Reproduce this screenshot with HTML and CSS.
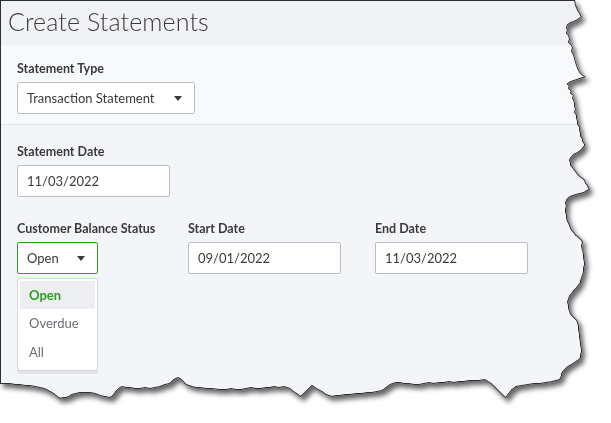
FILE: index.html
```html
<!DOCTYPE html>
<html>
<head>
<meta charset="utf-8">
<link rel="stylesheet" href="styles.css">
</head>
<body>
<div class="page">
  <div class="shadow-wrap">
    <div class="panel">
      <header class="head"><h1 class="title">Create Statements</h1></header>
      <section class="sec sec-type">
        <div class="field">
          <label class="lbl">Statement Type</label>
          <div class="ctrl select w-type"><span>Transaction Statement</span><i class="caret"></i></div>
        </div>
      </section>
      <section class="sec sec-main">
        <div class="field">
          <label class="lbl">Statement Date</label>
          <div class="ctrl w-date"><span>11/03/2022</span></div>
        </div>
        <div class="row">
          <div class="field">
            <label class="lbl">Customer Balance Status</label>
            <div class="dd">
              <div class="ctrl select w-status active"><span>Open</span><i class="caret"></i></div>
              <ul class="menu">
                <li class="item sel">Open</li>
                <li class="item">Overdue</li>
                <li class="item">All</li>
              </ul>
            </div>
          </div>
          <div class="field">
            <label class="lbl">Start Date</label>
            <div class="ctrl w-date"><span>09/01/2022</span></div>
          </div>
          <div class="field">
            <label class="lbl">End Date</label>
            <div class="ctrl w-date"><span>11/03/2022</span></div>
          </div>
        </div>
      </section>
      <svg class="edge" width="611" height="423" viewBox="0 0 611 423">
        <path d="M0,0 L575,0 L576,5 L578,10 L580,13 L582,17 L579,19 L576,21 L574,22 L571,23 L568,25 L567,28 L568,30 L567,33 L569,35 L570,39 L569,42 L572,45 L573,48 L572,51 L574,55 L575,58 L576,62 L577,65 L578,68 L580,72 L581,73 L583,75 L586,77 L583,78 L580,79 L577,80 L574,81 L571,82 L568,84 L570,86 L569,88 L572,91 L571,93 L574,95 L573,98 L574,100 L575,103 L575,106 L576,109 L575,112 L577,115 L577,118 L578,121 L578,124 L580,127 L580,130 L581,133 L581,136 L583,139 L583,141 L585,144 L585,146 L583,148 L582,150 L579,152 L578,153 L575,154 L573,156 L571,158 L570,160 L571,163 L571,165 L573,167 L574,169 L576,171 L577,173 L579,175 L581,177 L583,178 L585,180 L586,183 L588,185 L589,188 L590,190 L587,191 L584,193 L580,194 L576,195 L573,196 L570,197 L568,199 L567,200 L566,203 L567,206 L566,209 L566,212 L567,215 L567,218 L568,221 L570,225 L571,228 L572,230 L574,232 L576,235 L578,236 L580,238 L582,240 L583,242 L582,246 L583,250 L584,254 L584,258 L585,262 L585,265 L584,268 L584,272 L583,275 L582,278 L581,281 L581,283 L579,285 L578,287 L576,289 L574,291 L572,294 L570,296 L569,299 L568,302 L569,305 L569,308 L570,311 L571,314 L573,316 L575,318 L577,320 L578,322 L579,326 L579,330 L580,334 L580,338 L581,342 L581,345 L582,349 L582,352 L581,355 L581,358 L579,360 L576,362 L573,364 L570,366 L568,367 L566,369 L564,371 L563,372 L562,374 L562,376 L561,378 L560,380 L556,381 L552,382 L546,383 L540,384 L534,384 L528,385 L522,386 L516,387 L514,389 L512,390 L510,393 L508,395 L507,397 L505,398 L503,396 L500,393 L497,390 L494,387 L491,384 L488,382 L486,381 L484,380 L479,381 L474,381 L469,381 L464,382 L459,382 L454,383 L449,382 L444,383 L439,383 L434,384 L429,383 L424,384 L419,385 L414,385 L409,384 L404,384 L400,383 L396,383 L393,384 L390,385 L388,387 L386,388 L384,390 L382,391 L377,392 L372,393 L367,393 L362,394 L356,394 L350,395 L345,395 L340,396 L336,396 L332,397 L329,396 L326,395 L322,392 L318,390 L315,388 L312,386 L310,388 L308,390 L306,392 L304,394 L302,396 L300,397 L298,395 L295,393 L292,391 L290,389 L287,388 L284,387 L279,388 L274,387 L270,388 L266,388 L261,389 L256,389 L251,388 L246,389 L241,390 L236,390 L231,389 L226,390 L219,390 L212,389 L206,389 L200,388 L196,388 L192,387 L189,386 L186,385 L184,383 L182,381 L180,379 L178,378 L176,379 L174,380 L172,382 L170,384 L165,385 L160,387 L155,388 L150,389 L145,388 L140,389 L135,389 L130,388 L126,388 L122,387 L120,388 L118,390 L116,392 L114,395 L112,397 L110,398 L105,397 L100,396 L95,394 L90,393 L85,393 L80,393 L76,394 L72,395 L69,397 L66,398 L63,398 L60,399 L58,398 L56,396 L52,393 L48,391 L44,389 L40,388 L35,387 L30,386 L25,386 L20,385 L15,385 L10,384 L5,384 L0,384 Z" fill="none" stroke="#2e2f33" stroke-width="2"/>
      </svg>
    </div>
  </div>
</div>
</body>
</html>
```
FILE: styles.css
```css
* { box-sizing: border-box; margin: 0; padding: 0; }
html, body { width: 611px; height: 423px; background: #ffffff; overflow: hidden; }
body { font-family: Lato, "Open Sans", sans-serif; color: #393a3d; }

.page { width: 611px; height: 423px; }
.shadow-wrap { width: 611px; height: 423px; filter: drop-shadow(3px 4px 2.5px rgba(0, 0, 0, 0.6)); }

.panel {
  position: relative;
  width: 611px;
  height: 423px;
  background: #f4f5f8;
  clip-path: path('M0,0 L575,0 L576,5 L578,10 L580,13 L582,17 L579,19 L576,21 L574,22 L571,23 L568,25 L567,28 L568,30 L567,33 L569,35 L570,39 L569,42 L572,45 L573,48 L572,51 L574,55 L575,58 L576,62 L577,65 L578,68 L580,72 L581,73 L583,75 L586,77 L583,78 L580,79 L577,80 L574,81 L571,82 L568,84 L570,86 L569,88 L572,91 L571,93 L574,95 L573,98 L574,100 L575,103 L575,106 L576,109 L575,112 L577,115 L577,118 L578,121 L578,124 L580,127 L580,130 L581,133 L581,136 L583,139 L583,141 L585,144 L585,146 L583,148 L582,150 L579,152 L578,153 L575,154 L573,156 L571,158 L570,160 L571,163 L571,165 L573,167 L574,169 L576,171 L577,173 L579,175 L581,177 L583,178 L585,180 L586,183 L588,185 L589,188 L590,190 L587,191 L584,193 L580,194 L576,195 L573,196 L570,197 L568,199 L567,200 L566,203 L567,206 L566,209 L566,212 L567,215 L567,218 L568,221 L570,225 L571,228 L572,230 L574,232 L576,235 L578,236 L580,238 L582,240 L583,242 L582,246 L583,250 L584,254 L584,258 L585,262 L585,265 L584,268 L584,272 L583,275 L582,278 L581,281 L581,283 L579,285 L578,287 L576,289 L574,291 L572,294 L570,296 L569,299 L568,302 L569,305 L569,308 L570,311 L571,314 L573,316 L575,318 L577,320 L578,322 L579,326 L579,330 L580,334 L580,338 L581,342 L581,345 L582,349 L582,352 L581,355 L581,358 L579,360 L576,362 L573,364 L570,366 L568,367 L566,369 L564,371 L563,372 L562,374 L562,376 L561,378 L560,380 L556,381 L552,382 L546,383 L540,384 L534,384 L528,385 L522,386 L516,387 L514,389 L512,390 L510,393 L508,395 L507,397 L505,398 L503,396 L500,393 L497,390 L494,387 L491,384 L488,382 L486,381 L484,380 L479,381 L474,381 L469,381 L464,382 L459,382 L454,383 L449,382 L444,383 L439,383 L434,384 L429,383 L424,384 L419,385 L414,385 L409,384 L404,384 L400,383 L396,383 L393,384 L390,385 L388,387 L386,388 L384,390 L382,391 L377,392 L372,393 L367,393 L362,394 L356,394 L350,395 L345,395 L340,396 L336,396 L332,397 L329,396 L326,395 L322,392 L318,390 L315,388 L312,386 L310,388 L308,390 L306,392 L304,394 L302,396 L300,397 L298,395 L295,393 L292,391 L290,389 L287,388 L284,387 L279,388 L274,387 L270,388 L266,388 L261,389 L256,389 L251,388 L246,389 L241,390 L236,390 L231,389 L226,390 L219,390 L212,389 L206,389 L200,388 L196,388 L192,387 L189,386 L186,385 L184,383 L182,381 L180,379 L178,378 L176,379 L174,380 L172,382 L170,384 L165,385 L160,387 L155,388 L150,389 L145,388 L140,389 L135,389 L130,388 L126,388 L122,387 L120,388 L118,390 L116,392 L114,395 L112,397 L110,398 L105,397 L100,396 L95,394 L90,393 L85,393 L80,393 L76,394 L72,395 L69,397 L66,398 L63,398 L60,399 L58,398 L56,396 L52,393 L48,391 L44,389 L40,388 L35,387 L30,386 L25,386 L20,385 L15,385 L10,384 L5,384 L0,384 Z');
}

.edge { position: absolute; left: 0; top: 0; pointer-events: none; }

.head { height: 45px; background: #f1f2f5; padding: 6px 0 0 8px; }
.title { font-weight: 300; font-size: 25px; line-height: 31px; color: #393a3d; letter-spacing: 0.1px; }

.sec { padding-left: 17px; }
.sec-type { height: 80px; background: #f8f9fa; border-bottom: 1px solid #e3e5ea; padding-top: 15px; }
.sec-main { padding-top: 18px; }

.field { display: flex; flex-direction: column; }
.lbl { font-size: 12.5px; font-weight: 700; line-height: 16px; padding-top: 1px; margin-bottom: 5px; color: #393a3d; white-space: nowrap; }

.ctrl {
  height: 32px;
  background: #ffffff;
  border: 1px solid #babec5;
  border-radius: 2px;
  display: flex;
  align-items: center;
  padding-left: 9px;
  font-size: 13px;
  color: #393a3d;
}
.select { justify-content: space-between; padding-right: 12px; }
.w-type { width: 178px; }
.w-date { width: 153px; }
.w-status { width: 81px; }
.active { border-color: #2ca01c; }

.caret {
  width: 0; height: 0;
  border-left: 4.5px solid transparent;
  border-right: 4.5px solid transparent;
  border-top: 5px solid #393a3d;
}

.row { display: grid; grid-template-columns: 171px 187px 153px; margin-top: 23px; }

.dd { position: relative; }
.menu {
  position: absolute;
  left: 0; top: 36px;
  width: 81px;
  list-style: none;
  background: #ffffff;
  border: 1px solid #d4d7dc;
  border-radius: 3px;
  padding: 2px 2px 3px;
  box-shadow: 0 3px 0 #e2e4e8;
}
.item { height: 29px; line-height: 29px; padding-left: 9px; font-size: 13px; color: #6b6c72; }
.item.sel { background: #eceef1; color: #2ca01c; font-weight: 700; height: 28px; line-height: 28px; }
```
